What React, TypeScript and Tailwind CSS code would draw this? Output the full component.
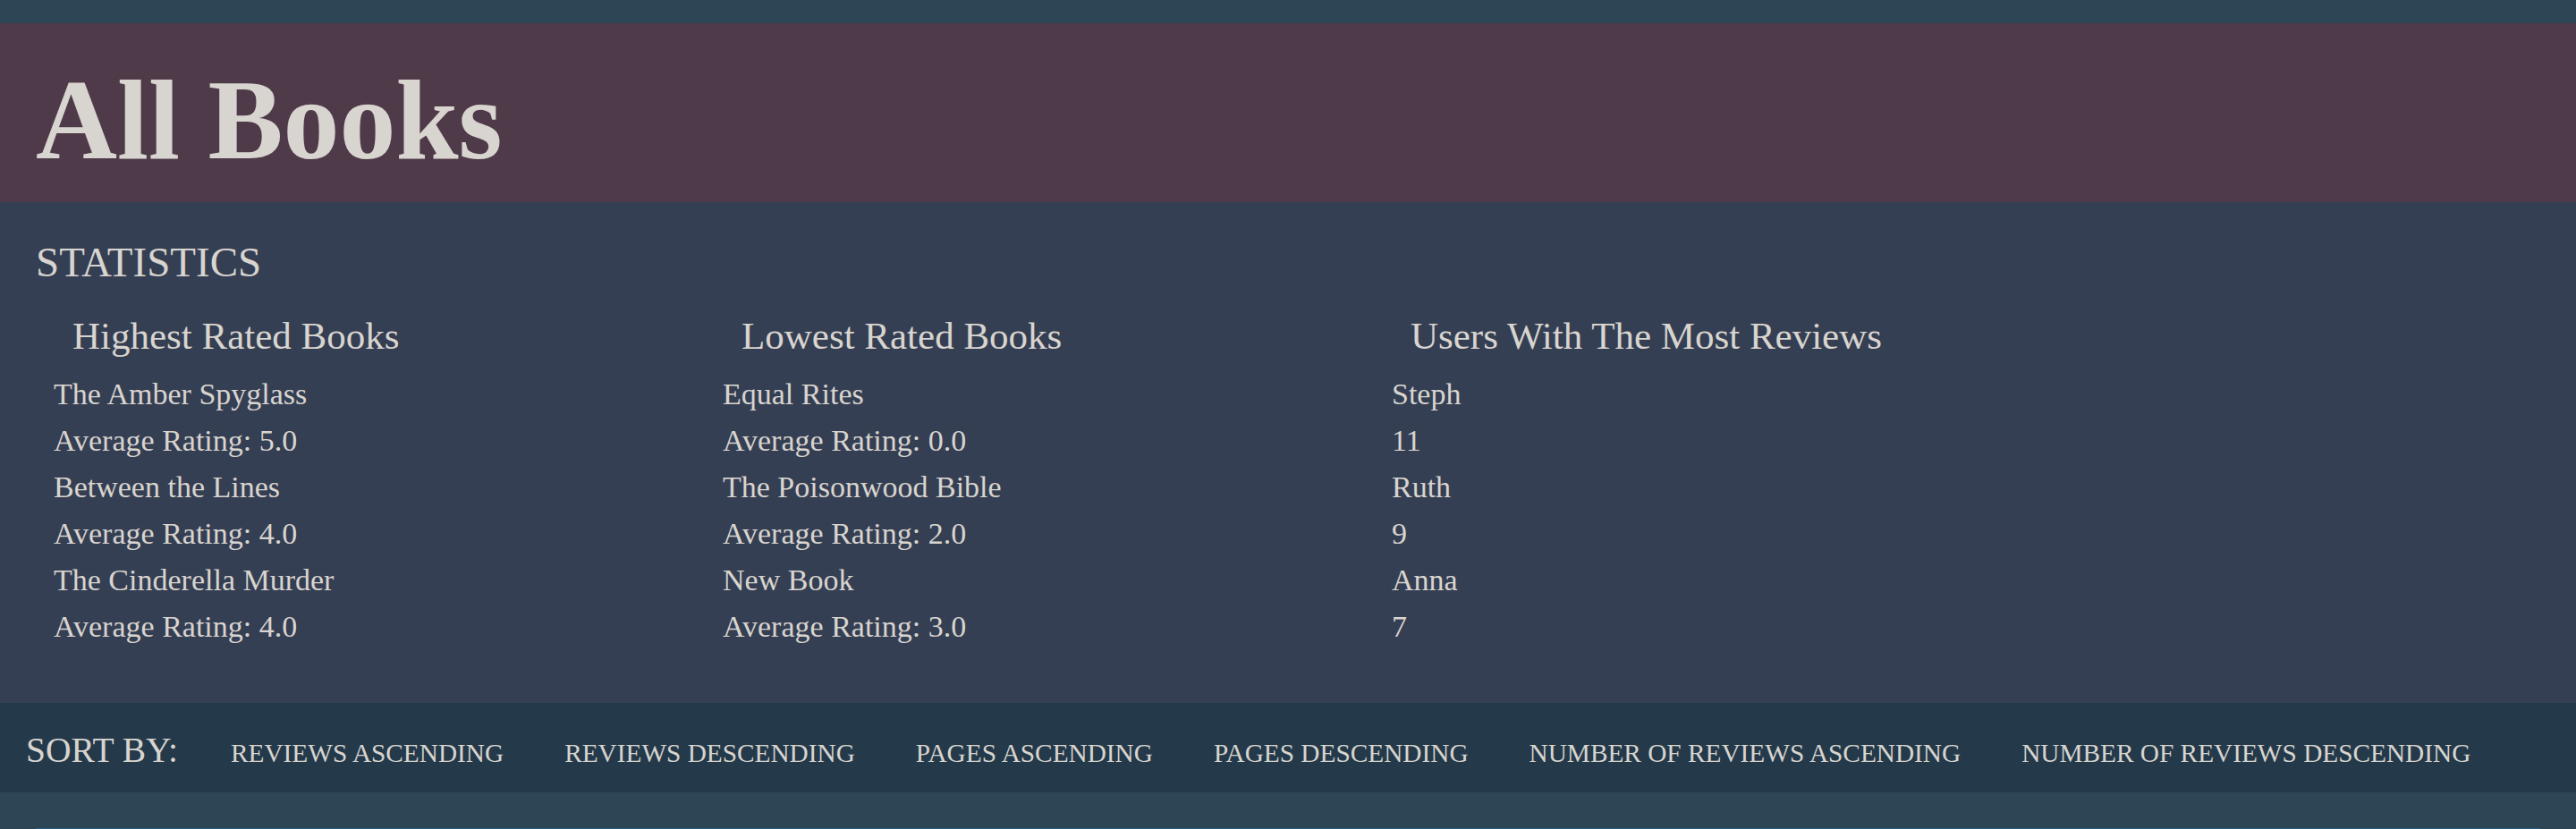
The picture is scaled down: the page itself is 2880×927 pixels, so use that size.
import { FC } from "react";

const serif = "font-['Liberation_Serif','Times_New_Roman',serif]";

interface StatColumnProps {
  title: string;
  rows: string[];
}

const StatColumn: FC<StatColumnProps> = ({ title, rows }) => {
  return (
    <div className="w-[748px] pl-[20px]">
      <h3 className="pl-[21px] text-[43px] leading-[43px] font-normal">{title}</h3>
      <ul className="mt-[18px]">
        {rows.map((row, i) => (
          <li key={i} className="text-[34px] leading-[52px]">
            {row}
          </li>
        ))}
      </ul>
    </div>
  );
};

const sortOptions = [
  "Reviews Ascending",
  "Reviews Descending",
  "Pages Ascending",
  "Pages Descending",
  "Number of Reviews Ascending",
  "Number of Reviews Descending",
];

export default function App() {
  return (
    <div className={`min-h-screen bg-[#2d4656] pt-[26px] text-[#d8d4cf] ${serif}`}>
      <header className="h-[200px] bg-[#4f3a49] px-[40px] pt-[46px]">
        <h1 className="text-[126px] leading-[126px] font-bold">All Books</h1>
      </header>

      <section className="bg-[#353f53] px-[40px] pt-[44px] pb-[59px]">
        <h2 className="text-[47px] leading-[47px] font-normal uppercase">Statistics</h2>
        <div className="mt-[37px] flex">
          <StatColumn
            title="Highest Rated Books"
            rows={[
              "The Amber Spyglass",
              "Average Rating: 5.0",
              "Between the Lines",
              "Average Rating: 4.0",
              "The Cinderella Murder",
              "Average Rating: 4.0",
            ]}
          />
          <StatColumn
            title="Lowest Rated Books"
            rows={[
              "Equal Rites",
              "Average Rating: 0.0",
              "The Poisonwood Bible",
              "Average Rating: 2.0",
              "New Book",
              "Average Rating: 3.0",
            ]}
          />
          <StatColumn
            title="Users With The Most Reviews"
            rows={["Steph", "11", "Ruth", "9", "Anna", "7"]}
          />
        </div>
      </section>

      <nav className="h-[100px] bg-[#243a4a] pl-[29px] pt-[33px] flex items-baseline">
        <span className="text-[39.5px] leading-[40px] uppercase">Sort by:</span>
        <div className="ml-[59px] flex items-baseline gap-[68px]">
          {sortOptions.map((opt) => (
            <button
              key={opt}
              className={`text-[29.3px] leading-[30px] uppercase text-[#d8d4cf] ${serif}`}
            >
              {opt}
            </button>
          ))}
        </div>
      </nav>

      <div className="mt-[40px] mx-[40px] border-t border-[#2a5d85]" />
    </div>
  );
}
